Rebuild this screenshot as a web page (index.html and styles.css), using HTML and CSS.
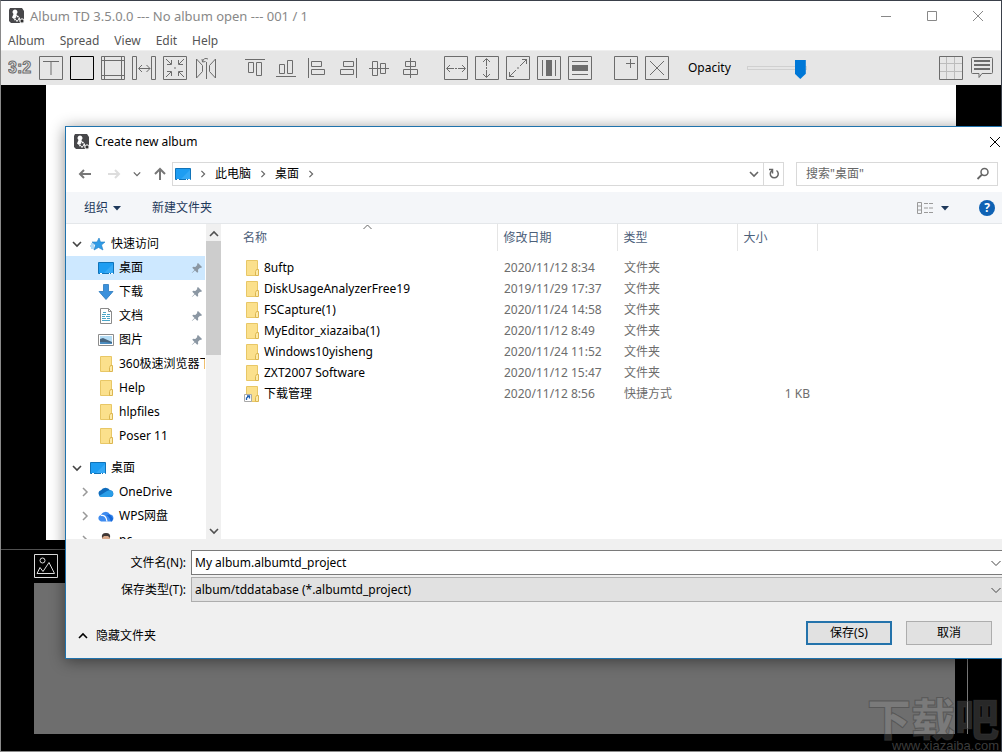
FILE: index.html
```html
<!DOCTYPE html>
<html lang="zh-CN">
<head>
<meta charset="utf-8">
<title>Album TD 3.5.0.0</title>
<link rel="stylesheet" href="styles.css">
</head>
<body>
<svg class="defs" aria-hidden="true">
  <symbol id="app" viewBox="0 0 16 16">
    <path d="M1 0h12l2 3v12H2l-2-2V2z" fill="#47474a"/>
    <path d="M6 1.500a2.500 2.500 0 0 1 1.500 4.500l.5 2-3 3-2-1.500L4.500 6A2.500 2.500 0 0 1 6 1.500z" fill="#fff"/>
    <circle cx="8" cy="10.500" r="2.200" fill="#47474a" stroke="#fff" stroke-width="1.600" stroke-dasharray="1.600 .7"/>
    <circle cx="13" cy="13" r="2.200" fill="#555" stroke="#fff" stroke-width="1"/>
    <circle cx="13" cy="13" r="1" fill="#222"/>
  </symbol>
  <symbol id="folder" viewBox="0 0 16 16">
    <path d="M2.500.5h11v15h-11z" fill="#fbe08c" stroke="#e8c766"/>
    <path d="M12.500 9.500h2v6h-3v-4z" fill="#fdebab" stroke="#dcb650"/>
  </symbol>
  <symbol id="shortcut" viewBox="0 0 16 16">
    <path d="M2.500.5h11v15h-11z" fill="#fbe08c" stroke="#e8c766"/>
    <path d="M12.500 9.500h2v6h-3v-4z" fill="#fdebab" stroke="#dcb650"/>
    <path d="M.5 8.500h7v7h-7z" fill="#fff" stroke="#a8a8a8"/>
    <path d="M2.500 14v-2l2.500-2M3 10h2.500v2.500" fill="none" stroke="#1f5fb0" stroke-width="1.300"/>
  </symbol>
  <symbol id="monitor" viewBox="0 0 16 16">
    <path d="M.5 2.500h15v11h-15z" fill="#1e9df2" stroke="#1173b8"/>
    <path d="M6 13L15 4v9z" fill="#35a9f6"/>
    <path d="M2 13.500h2M11 13.500h1M13 13.500h2" stroke="#fff"/>
  </symbol>
  <symbol id="star" viewBox="0 0 16 16">
    <path d="M9 2l1.500 4H15l-3.500 3 1.500 5-4.500-2.500L4 14l1.500-5L2 6h5z" fill="#2f9be6" stroke="#2380c4" stroke-width=".6"/>
    <path d="M1 8h3M0 10h4M1 12h3" stroke="#5fb4ee"/>
  </symbol>
  <symbol id="down" viewBox="0 0 16 16"><path d="M5.500.5h5v7h4.500L8 15.500 1 7.500h4.500z" fill="#3b91dc" stroke="#2a78bd" stroke-width=".8"/></symbol>
  <symbol id="doc" viewBox="0 0 16 16">
    <path d="M2.500.5h8l3 3v12h-11z" fill="#fff" stroke="#8a8a8a"/><path d="M10.500.5v3h3" fill="none" stroke="#8a8a8a"/>
    <path d="M4 6.500h4M9 6.500h3M4 8.500h3M8 8.500h4M4 10.500h4M9 10.500h3M4 12.500h8M5 4.500h3" stroke="#4aa6c8"/>
  </symbol>
  <symbol id="picture" viewBox="0 0 16 16">
    <path d="M.5 2.500h15v11h-15z" fill="#fff" stroke="#8c8c8c"/><path d="M2 4h12v8H2z" fill="#b4dcf4"/>
    <path d="M2 7l3-1 9 4v1H2z" fill="#46647e"/><path d="M2 10l5 0 7 1v1H2z" fill="#4a8cc0"/>
  </symbol>
  <symbol id="pin" viewBox="0 0 12 12"><path d="M7 1l4 4-1 1-1-.3-2 2 .2 2.300-1 .8L4 8.500 1 11 .8 10.800 3.500 8 1.300 5.800l.8-1 2.200.2 2-2L6 2z" fill="#8b97a3"/></symbol>
  <symbol id="cloud" viewBox="0 0 16 16">
    <path d="M3.500 13a3.500 3.500 0 0 1-.5-6.800A5 4.500 0 0 1 12 6.200a3.500 3.500 0 0 1 1 6.800z" fill="#0f6cbd"/>
    <path d="M1 12l8-5q2-1 4-.5a3.500 3.500 0 0 1 0 6.500H3z" fill="#2a9ee8"/>
  </symbol>
  <symbol id="wps" viewBox="0 0 16 16">
    <path d="M3 13.500a3.200 3.200 0 0 1 0-6.300 4.800 4.500 0 0 1 9-.7 3.600 3.600 0 0 1 1 7z" fill="#3f8cf0"/>
    <path d="M3 7.500q5-1 6 6" fill="none" stroke="#fff" stroke-width="1.200"/><path d="M8 7q3 1 5 6.500h1l1-3-3-4z" fill="#1668d8"/>
  </symbol>
  <symbol id="person" viewBox="0 0 16 16"><path d="M3 16q0-5 5-5t5 5z" fill="#4b9a5c"/><circle cx="8" cy="6" r="4" fill="#d9a98b"/><path d="M4 6q-1-5 4-5t4 5l-2-2H6z" fill="#403836"/></symbol>
  <symbol id="chev-down" viewBox="0 0 10 10"><path d="M1 3l4 4 4-4" fill="none" stroke="currentColor" stroke-width="1.600"/></symbol>
  <symbol id="chev-thin" viewBox="0 0 10 10"><path d="M.5 3L5 7.500 9.500 3" fill="none" stroke="currentColor"/></symbol>
  <symbol id="chev-right" viewBox="0 0 10 10"><path d="M3 1l4 4-4 4" fill="none" stroke="currentColor" stroke-width="1.500"/></symbol>
  <symbol id="chev-up" viewBox="0 0 10 10"><path d="M1 7l4-4 4 4" fill="none" stroke="currentColor" stroke-width="1.600"/></symbol>
  <symbol id="caret" viewBox="0 0 10 10"><path d="M1 3h8L5 7.500z" fill="currentColor"/></symbol>
</svg>

<div class="app">
  <header class="titlebar">
    <svg class="i16"><use href="#app"/></svg>
    <h1 class="title">Album TD 3.5.0.0 --- No album open --- 001 / 1</h1>
    <div class="window-buttons">
      <button aria-label="Minimize"><svg viewBox="0 0 12 12"><path d="M1 6.500h10"/></svg></button>
      <button aria-label="Maximize"><svg viewBox="0 0 12 12"><path d="M1.500 1.500h9v9h-9z"/></svg></button>
      <button aria-label="Close"><svg viewBox="0 0 12 12"><path d="M1 1l10 10M11 1L1 11"/></svg></button>
    </div>
  </header>
  <nav class="menubar">
    <button>Album</button><button>Spread</button><button>View</button><button>Edit</button><button>Help</button>
  </nav>
  <div class="toolbar">
    <div class="tools">
      <button aria-label="Aspect ratio"><svg viewBox="0 0 24 24"><text class="ratio" x="0" y="17">3:2</text></svg></button>
      <button aria-label="Text"><svg viewBox="0 0 24 24"><path d="M.5.5h23v23H.5zM4 5.500h16M12 5.500V19"/></svg></button>
      <button aria-label="Frame"><svg class="black" viewBox="0 0 24 24"><path d="M.5.5h23v23H.5z"/></svg></button>
      <button aria-label="Margins"><svg viewBox="0 0 24 24"><path d="M.5.5h23v23H.5zM3.500 0v24M20.500 0v24M0 4.500h24M0 19.500h24"/></svg></button>
      <button aria-label="Gap"><svg viewBox="0 0 24 24"><path d="M.5.500h4v23h-4zM19.500.5h4v23h-4zM7 12.500h11M10 9l-3.500 3.500L10 16M14.500 9l3.500 3.500-3.500 3.500"/></svg></button>
      <button aria-label="Shrink"><svg viewBox="0 0 24 24"><path d="M.5.5h23v23H.5zM3 3l5 5M4 8.500h4.500V4M21 3l-5 5M20 8.500h-4.500V4M3 21l5-5M4 15.500h4.500V20M21 21l-5-5M20 15.500h-4.500V20M11 12h2"/></svg></button>
      <button aria-label="Mirror"><svg viewBox="0 0 24 24"><path d="M2.500 3v19l6-6.500v-6zM21.500 3v19l-6-6.500v-6zM12.500 6v17M8.500 6q1-5 5.500-3M8 3l.5 3 3-.5"/></svg></button>
    </div>
    <div class="tools align">
      <button aria-label="Align top"><svg viewBox="0 0 24 24"><path d="M2 3.500h20M5.500 6.500h5v10h-5zM13.500 6.500h5v13h-5z"/></svg></button>
      <button aria-label="Align bottom"><svg viewBox="0 0 24 24"><path d="M2 20.500h20M5.500 8.500h5v9h-5zM13.500 4.500h5v13h-5z"/></svg></button>
      <button aria-label="Align left"><svg viewBox="0 0 24 24"><path d="M3.500 2v20M6.500 5.500h10v5h-10zM6.500 13.500h13v5h-13z"/></svg></button>
      <button aria-label="Align right"><svg viewBox="0 0 24 24"><path d="M20.500 2v20M7.500 5.500h10v5h-10zM4.500 13.500h13v5h-13z"/></svg></button>
      <button aria-label="Align middle"><svg viewBox="0 0 24 24"><path d="M2 12.500h20M5.500 5.500h5v14h-5zM13.500 7.500h5v10h-5z"/></svg></button>
      <button aria-label="Align center"><svg viewBox="0 0 24 24"><path d="M12.500 2v20M7.500 5.500h10v5h-10zM5.500 13.500h14v5h-14z"/></svg></button>
    </div>
    <div class="tools">
      <button aria-label="Fit width"><svg viewBox="0 0 24 24"><path d="M.5.5h23v23H.5zM3 12.500h7M11 12.500h2M14 12.500h7M6 9l-3.500 3.500L6 16M18 9l3.500 3.500L18 16"/></svg></button>
      <button aria-label="Fit height"><svg viewBox="0 0 24 24"><path d="M.5.5h23v23H.5zM11.500 3v7M11.500 11v2M11.500 14v7M8 6l3.500-3.500L15 6M8 18l3.500 3.500L15 18"/></svg></button>
      <button aria-label="Fit both"><svg viewBox="0 0 24 24"><path d="M.5.5h23v23H.5zM3 21l7-7M14 10l7-7M11 12h2M16 3.500h4.500V8M3.500 16v4.500H8"/></svg></button>
      <button aria-label="Same width"><svg viewBox="0 0 24 24"><path d="M.5.5h23v23H.5zM5.500 4v16M18.500 4v16"/><path class="solid" d="M9 4h6v16H9z"/></svg></button>
      <button aria-label="Same height"><svg viewBox="0 0 24 24"><path d="M.5.5h23v23H.5zM4 5.500h16M4 18.500h16"/><path class="solid" d="M4 9h16v6H4z"/></svg></button>
    </div>
    <div class="tools">
      <button aria-label="Add"><svg viewBox="0 0 24 24"><path d="M.5.5h23v23H.5zM12 7.500h9M16.500 3v9"/></svg></button>
      <button aria-label="Delete"><svg viewBox="0 0 24 24"><path d="M.5.5h23v23H.5zM5 5l14 14M19 5L5 19"/></svg></button>
    </div>
    <label class="opacity">Opacity <input type="range" min="0" max="100" value="100"></label>
    <div class="tools end">
      <button aria-label="Grid"><svg viewBox="0 0 24 24"><path class="faint" d="M7.500 0v24M15.500 0v24M0 7.500h24M0 15.500h24"/><path d="M.5.5h23v23H.5z"/></svg></button>
      <button aria-label="Comments"><svg viewBox="0 0 24 24"><path d="M2.500 1.500h19q1 0 1 1v14q0 1-1 1H12l-3 4v-4H2.500q-1 0-1-1v-14q0-1 1-1z"/><path class="thick" d="M4 5h16M4 9h16M4 13h16"/></svg></button>
    </div>
  </div>
  <main class="canvas"><div class="page"></div></main>
  <section class="tray">
    <button class="photos" aria-label="Photos"><svg viewBox="0 0 24 24"><path d="M.5.5h23v23H.5zM3 19.500l3-6 3 4 6-9 5.500 11zM11 6.500a2.500 2.500 0 1 1-5 0 2.500 2.500 0 1 1 5 0z"/></svg></button>
    <div class="tray-frame"><div class="strip"></div></div>
  </section>
</div>

<section class="dialog" role="dialog" aria-labelledby="dialog-title">
  <header class="dialog-title">
    <svg class="i16"><use href="#app"/></svg>
    <h2 id="dialog-title">Create new album</h2>
    <button class="close" aria-label="Close"><svg viewBox="0 0 12 12"><path d="M1 1l10 10M11 1L1 11"/></svg></button>
  </header>
  <div class="location">
    <div class="history">
      <button aria-label="Back"><svg class="arrow" viewBox="0 0 14 14"><path d="M13 7H2M6 3L2 7l4 4"/></svg></button>
      <button class="off" aria-label="Forward"><svg class="arrow" viewBox="0 0 14 14"><path d="M1 7h11M8 3l4 4-4 4"/></svg></button>
      <button class="recent" aria-label="Recent"><svg><use href="#chev-down"/></svg></button>
      <button aria-label="Up"><svg class="arrow" viewBox="0 0 14 14"><path d="M7 13V2M2 7l5-5 5 5"/></svg></button>
    </div>
    <div class="address">
      <div class="crumbs">
        <svg class="i16"><use href="#monitor"/></svg><svg class="sep"><use href="#chev-right"/></svg>
        <a href="#">此电脑</a><svg class="sep"><use href="#chev-right"/></svg>
        <a href="#">桌面</a><svg class="sep"><use href="#chev-right"/></svg>
      </div>
      <button aria-label="Locations"><svg class="i10"><use href="#chev-down"/></svg></button>
      <button class="refresh" aria-label="Refresh"><svg class="i14" viewBox="0 0 14 14"><path d="M9.500 3.500A4 4 0 1 1 5 3.500M2 2.500h3.500v4" fill="none" stroke="#666" stroke-width="1.500"/></svg></button>
    </div>
    <div class="search">
      <input type="search" aria-label="搜索" placeholder='搜索"桌面"'>
      <svg class="i14" viewBox="0 0 14 14"><circle cx="8.500" cy="5" r="3.500" fill="none" stroke="#666" stroke-width="1.500"/><path d="M6 7.500L1.500 12" stroke="#666" stroke-width="1.800"/></svg>
    </div>
  </div>
  <div class="commands">
    <button>组织 <svg class="i10"><use href="#caret"/></svg></button>
    <button>新建文件夹</button>
    <button class="views" aria-label="Views"><svg class="list-icon" viewBox="0 0 18 14"><path d="M1.500 1.500h4v11h-4zM1 5h5M1 9h5M8 2.500h4M13 2.500h4M8 7h4M13 7h4M8 11.500h4M13 11.500h4"/></svg><svg class="i10"><use href="#caret"/></svg></button>
    <button class="help" aria-label="Help">?</button>
  </div>
  <div class="browser">
    <ul class="tree">
      <li class="root"><svg class="i10"><use href="#chev-down"/></svg><svg class="i16"><use href="#star"/></svg><span>快速访问</span></li>
      <li class="selected"><svg class="i16"><use href="#monitor"/></svg><span>桌面</span><svg class="pin"><use href="#pin"/></svg></li>
      <li><svg class="i16"><use href="#down"/></svg><span>下载</span><svg class="pin"><use href="#pin"/></svg></li>
      <li><svg class="i16"><use href="#doc"/></svg><span>文档</span><svg class="pin"><use href="#pin"/></svg></li>
      <li><svg class="i16"><use href="#picture"/></svg><span>图片</span><svg class="pin"><use href="#pin"/></svg></li>
      <li><svg class="i16"><use href="#folder"/></svg><span>360极速浏览器下载</span></li>
      <li><svg class="i16"><use href="#folder"/></svg><span>Help</span></li>
      <li><svg class="i16"><use href="#folder"/></svg><span>hlpfiles</span></li>
      <li><svg class="i16"><use href="#folder"/></svg><span>Poser 11</span></li>
      <li class="root second"><svg class="i10"><use href="#chev-down"/></svg><svg class="i16"><use href="#monitor"/></svg><span>桌面</span></li>
      <li class="closed"><svg class="i10"><use href="#chev-right"/></svg><svg class="i16"><use href="#cloud"/></svg><span>OneDrive</span></li>
      <li class="closed"><svg class="i10"><use href="#chev-right"/></svg><svg class="i16"><use href="#wps"/></svg><span>WPS网盘</span></li>
      <li class="closed"><svg class="i10"><use href="#chev-right"/></svg><svg class="i16"><use href="#person"/></svg><span>pc</span></li>
    </ul>
    <div class="scrollbar">
      <svg class="i10"><use href="#chev-up"/></svg><div class="thumb"></div><svg class="i10"><use href="#chev-down"/></svg>
    </div>
    <div class="files">
      <table>
        <thead><tr><th class="name">名称<svg class="sort"><use href="#chev-thin-up"/><path d="M.5 5L4.500 1l4 4"/></svg></th><th class="date">修改日期</th><th class="type">类型</th><th class="size">大小</th></tr></thead>
        <tbody>
          <tr><td><div class="file"><svg class="i16"><use href="#folder"/></svg>8uftp</div></td><td>2020/11/12 8:34</td><td>文件夹</td><td></td></tr>
          <tr><td><div class="file"><svg class="i16"><use href="#folder"/></svg>DiskUsageAnalyzerFree19</div></td><td>2019/11/29 17:37</td><td>文件夹</td><td></td></tr>
          <tr><td><div class="file"><svg class="i16"><use href="#folder"/></svg>FSCapture(1)</div></td><td>2020/11/24 14:58</td><td>文件夹</td><td></td></tr>
          <tr><td><div class="file"><svg class="i16"><use href="#folder"/></svg>MyEditor_xiazaiba(1)</div></td><td>2020/11/12 8:49</td><td>文件夹</td><td></td></tr>
          <tr><td><div class="file"><svg class="i16"><use href="#folder"/></svg>Windows10yisheng</div></td><td>2020/11/24 11:52</td><td>文件夹</td><td></td></tr>
          <tr><td><div class="file"><svg class="i16"><use href="#folder"/></svg>ZXT2007 Software</div></td><td>2020/11/12 15:47</td><td>文件夹</td><td></td></tr>
          <tr><td><div class="file"><svg class="i16"><use href="#shortcut"/></svg>下载管理</div></td><td>2020/11/12 8:56</td><td>快捷方式</td><td>1 KB</td></tr>
        </tbody>
      </table>
    </div>
  </div>
  <footer class="save">
    <div class="fields">
      <label for="filename">文件名(N):</label>
      <div class="combo"><input id="filename" type="text" value="My album.albumtd_project"><svg class="i10"><use href="#chev-thin"/></svg></div>
      <label for="filetype">保存类型(T):</label>
      <div class="combo"><select id="filetype"><option>album/tddatabase (*.albumtd_project)</option></select><svg class="i10"><use href="#chev-thin"/></svg></div>
    </div>
    <div class="actions">
      <button class="hide"><svg class="i10"><use href="#chev-up"/></svg>隐藏文件夹</button>
      <button class="push primary">保存(S)</button>
      <button class="push">取消</button>
    </div>
  </footer>
</section>

<div class="watermark"><div class="mark">下载吧</div><div class="url">www.xiazaiba.com</div></div>
</body>
</html>
```

FILE: styles.css
```css
* { box-sizing: border-box; }

body, button, input, select {
  font-family: "Noto Sans", "Noto Sans CJK SC", sans-serif;
  font-size: 12px;
  line-height: 16px;
}

body {
  margin: 0;
  position: relative;
  min-height: 100vh;
  overflow: hidden;
  color: #000;
}

button {
  padding: 0;
  border: 0;
  background: none;
  color: inherit;
  display: flex;
  align-items: center;
}

svg { display: block; flex: none; }
ul { margin: 0; padding: 0; list-style: none; }
h1, h2 { margin: 0; font-size: 12px; font-weight: 400; }

.defs { display: none; }
.i16 { width: 16px; height: 16px; }
.i14 { width: 14px; height: 14px; }
.i10 { width: 10px; height: 10px; }

/* Main window */
.app {
  display: flex;
  flex-direction: column;
  min-height: 100vh;
  background: #000;
  border: 1px solid #8a8a8a;
  border-top-color: #3a404a;
  border-right-color: #3a404a;
}

.titlebar {
  display: flex;
  align-items: center;
  gap: 5px;
  height: 29px;
  padding-left: 8px;
  background: #fff;
  color: #888;
}
.title { font-size: 13px; }

.window-buttons { display: flex; margin-left: auto; }
.window-buttons button { width: 46px; height: 28px; justify-content: center; }
.window-buttons svg, .close svg { width: 12px; height: 12px; fill: none; stroke: #888; }

.menubar {
  display: flex;
  gap: 15px;
  height: 20px;
  padding: 2px 0 0 7px;
  background: #fff;
  color: #555;
}

.toolbar {
  display: flex;
  align-items: center;
  gap: 22px;
  height: 35px;
  padding: 0 7px;
  background: #e6e6e6;
  border-top: 1px solid #efefef;
}

.tools { display: flex; gap: 7px; }
.align { padding-left: 3px; }
.end { margin-left: auto; }
.tools svg { width: 24px; height: 24px; fill: none; stroke: #6c6c6c; }
.tools .black { stroke: #000; }
.tools .solid { fill: #6c6c6c; stroke: none; }
.tools .faint { stroke: #bcbcbc; }
.tools .thick { stroke-width: 2; }
.ratio {
  font-family: "Liberation Sans", sans-serif;
  font-size: 16px;
  font-weight: 700;
  fill: #e6e6e6;
}

.opacity { display: flex; align-items: center; gap: 16px; margin-left: -3px; }
.opacity input {
  appearance: none;
  width: 60px;
  height: 20px;
  margin: 0;
  background: none;
}
.opacity input::-webkit-slider-runnable-track {
  height: 4px;
  border: 1px solid #d0d0d0;
}
.opacity input::-webkit-slider-thumb {
  appearance: none;
  width: 11px;
  height: 19px;
  margin-top: -7px;
  background: #0078d7;
  clip-path: polygon(0 0, 100% 0, 100% 72%, 50% 100%, 0 72%);
}

.canvas { display: flex; flex: 1; padding: 0 45px 9px; }
.page { flex: 1; background: #fff; }

.tray {
  padding: 4px 33px 17px;
  border-top: 1px solid #505050;
}
.photos svg { width: 24px; height: 24px; fill: none; stroke: #ddd; }
.tray-frame { margin-top: 5px; padding-right: 12px; border-right: 1px solid #777; }
.strip { height: 151px; background: #6e6e6e; }

/* Save dialog */
.dialog {
  position: absolute;
  top: 126px;
  left: 65px;
  right: 0;
  background: #fff;
  border: 1px solid #2073ad;
  border-right: 0;
  box-shadow: 0 2px 14px rgba(0, 0, 0, .45);
}

.dialog-title { display: flex; align-items: center; gap: 5px; height: 30px; padding-left: 8px; }
.close { margin-left: auto; padding-right: 1px; }
.close svg { stroke: #000; }

.location { display: flex; height: 35px; padding: 5px 4px 6px 12px; }
.history { display: flex; align-items: center; gap: 12px; width: 94px; }
.history svg { width: 8px; height: 8px; color: #666; }
.history .arrow { width: 14px; height: 14px; fill: none; stroke: #777; stroke-width: 2; }
.history .off .arrow { stroke: #ddd; }
.history .off { margin-left: 3px; }

.address, .search { display: flex; border: 1px solid #d9d9d9; }
.address { flex: 1; color: #666; }
.crumbs { display: flex; align-items: center; gap: 8px; flex: 1; padding-left: 2px; }
.crumbs a { color: #000; text-decoration: none; }
.sep { width: 8px; height: 8px; }
.address button { padding: 0 4px; }
.address .refresh { width: 20px; padding: 0 3px; border-left: 1px solid #d9d9d9; }
.search { align-items: center; width: 202px; margin-left: 12px; padding: 0 7px 0 9px; }
.search input { flex: 1; min-width: 0; padding: 0; border: 0; outline: 0; }
.search input::placeholder { color: #666; }

.commands {
  display: flex;
  align-items: center;
  gap: 30px;
  height: 32px;
  padding: 0 7px 0 18px;
  background: #f4f6f9;
  border-bottom: 1px solid #e4e7ea;
  color: #1e395b;
}
.commands button { gap: 4px; }
.commands .views { gap: 6px; margin: 0 -1px 0 auto; }
.list-icon { width: 18px; height: 14px; fill: none; stroke: #9a9a9a; }
.commands .help {
  width: 16px;
  height: 16px;
  justify-content: center;
  border-radius: 50%;
  background: #0f62b4;
  color: #fff;
  font-weight: 700;
}

.browser { display: flex; height: 315px; overflow: hidden; }
.tree { width: 140px; padding: 8px 1px 0 0; overflow: hidden; }
.tree li {
  display: flex;
  align-items: center;
  gap: 5px;
  height: 24px;
  padding: 0 2px 0 32px;
  white-space: nowrap;
  overflow: hidden;
}
.tree .root { gap: 5px; padding-left: 6px; }
.tree .root .i10 { margin-right: 3px; color: #444; }
.tree .second { margin-top: 8px; }
.tree .closed { padding-left: 14px; }
.tree .closed .i10 { margin-right: 3px; color: #999; }
.tree .selected { background: #cde8ff; }
.pin { width: 12px; height: 12px; margin-left: auto; }

.scrollbar {
  display: flex;
  flex-direction: column;
  align-items: center;
  width: 15px;
  padding: 5px 0 3px;
  background: #f0f0f0;
  color: #505050;
}
.scrollbar .thumb { width: 15px; height: 114px; margin: 2px 0 auto; background: #cdcdcd; }

.files { flex: 1; padding-left: 3px; }
.files table { border-collapse: collapse; table-layout: fixed; width: 593px; }
.files th {
  position: relative;
  height: 27px;
  padding: 0 6px;
  border-right: 1px solid #e5e5e5;
  color: #4c607a;
  font-weight: 400;
  text-align: left;
}
.files .name { width: 273px; padding-left: 19px; }
.files .date, .files .type { width: 120px; }
.files .size { width: 80px; }
.sort { position: absolute; top: 0; left: 139px; width: 9px; height: 6px; fill: none; stroke: #666; }
.files td { height: 21px; padding: 0 7px; color: #6d6d6d; }
.files td:first-child { padding-left: 20px; color: #000; }
.files td:last-child { text-align: right; }
.files tbody::before { content: ""; display: block; height: 6px; }
.file { display: flex; align-items: center; gap: 4px; }

.save { padding: 11px 0 13px; background: #f0f0f0; }
.fields {
  display: grid;
  grid-template-columns: 120px 1fr;
  gap: 2px 5px;
  align-items: center;
  text-align: right;
}
.combo { position: relative; }
.combo input, .combo select {
  appearance: none;
  display: block;
  width: 100%;
  height: 25px;
  padding: 0 16px 0 3px;
  border: 1px solid #7a7a7a;
  border-right: 0;
  border-radius: 0;
  background: #fff;
  color: #000;
  outline: 0;
}
.combo select { border-color: #adadad; background: #e1e1e1; }
.combo svg { position: absolute; top: 8px; right: 1px; color: #444; }

.actions { display: flex; align-items: center; gap: 14px; padding: 19px 10px 0 12px; }
.hide { gap: 8px; margin-right: auto; padding-top: 6px; }
.push {
  width: 86px;
  height: 24px;
  justify-content: center;
  border: 1px solid #adadad;
  background: #e1e1e1;
}
.primary { border: 2px solid #2473ab; }

.watermark {
  position: absolute;
  right: 3px;
  bottom: 0;
  color: rgba(160, 160, 160, .25);
  text-align: right;
  pointer-events: none;
}
.mark {
  font-family: "Noto Sans CJK SC", sans-serif;
  font-size: 44px;
  line-height: 46px;
  font-weight: 900;
  -webkit-text-stroke: 1px rgba(60, 60, 60, .5);
}
.url { font-family: "Liberation Sans", sans-serif; font-size: 13px; line-height: 12px; color: rgba(120, 120, 120, .5); }
```
